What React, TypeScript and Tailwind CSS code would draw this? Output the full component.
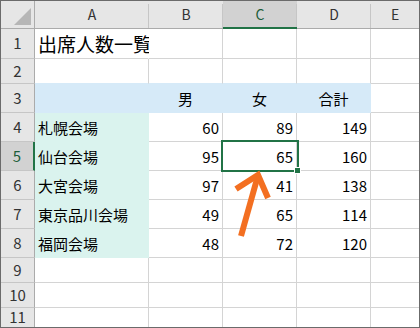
import React from "react";

type Fill = "white" | "blue" | "teal";

const COLS = ["A", "B", "C", "D", "E"];
const ROW_H = ["h-[30px]", "h-[25px]", "h-[29px]", "h-[29px]", "h-[29px]", "h-[29px]", "h-[29px]", "h-[29px]", "h-[25px]", "h-[25px]", "h-[19px]"];

// sheet contents, row 1..11, columns A..E
const DATA: string[][] = [
  ["出席人数一覧", "", "", "", ""],
  ["", "", "", "", ""],
  ["", "男", "女", "合計", ""],
  ["札幌会場", "60", "89", "149", ""],
  ["仙台会場", "95", "65", "160", ""],
  ["大宮会場", "97", "41", "138", ""],
  ["東京品川会場", "49", "65", "114", ""],
  ["福岡会場", "48", "72", "120", ""],
  ["", "", "", "", ""],
  ["", "", "", "", ""],
  ["", "", "", "", ""],
];

const BG: Record<Fill, string> = {
  white: "bg-white",
  blue: "bg-[#d6eaf8]",
  teal: "bg-[#daf3ee]",
};
const BR: Record<string, string> = {
  gray: "border-r-[#d4d4d4]",
  white: "border-r-white",
  blue: "border-r-[#d6eaf8]",
  teal: "border-r-[#daf3ee]",
};
const BB: Record<string, string> = {
  gray: "border-b-[#d4d4d4]",
  blue: "border-b-[#d6eaf8]",
  teal: "border-b-[#daf3ee]",
};

function fillOf(r: number, c: number): Fill {
  if (r === 3 && c <= 3) return "blue";
  if (r >= 4 && r <= 8 && c === 0) return "teal";
  return "white";
}

function DataCell({ r, c }: { r: number; c: number }) {
  const text = DATA[r - 1][c];
  const fill = fillOf(r, c);
  const right = c === 4 ? "border-r-0" : fill !== "white" ? BR[fill] : r === 1 && c === 0 ? BR.white : BR.gray;
  const below = r < 11 ? fillOf(r + 1, c) : "white";
  const bottom = r === 11 ? "border-b-0" : fill !== "white" ? BB[fill] : below !== "white" ? BB[below] : BB.gray;
  const isNum = /^\d+$/.test(text);
  const align = r === 3 ? "justify-center" : isNum ? "justify-end pr-[3px]" : "justify-start pl-[3px]";
  const size = r === 1 ? "text-[19px]" : "text-[15px]";
  const selected = r === 5 && c === 2;

  return (
    <div className={`relative flex items-center border-r border-b ${BG[fill]} ${right} ${bottom} ${align} ${ROW_H[r - 1]}`}>
      <span className={`whitespace-nowrap text-black leading-none ${size}`}>{text}</span>
      {selected && (
        <>
          <div className="absolute -left-[2px] -top-[2px] w-[78px] h-[32px] border-2 border-[#217346] z-10" />
          <div className="absolute left-[71px] top-[25px] w-[7px] h-[7px] bg-[#217346] border border-white z-20" />
        </>
      )}
    </div>
  );
}

export default function App() {
  return (
    <div className="w-[420px] h-[328px] border border-[#6b6b6b] bg-white overflow-hidden font-['Noto_Sans_CJK_JP','Noto_Sans',sans-serif]">
      <div className="relative grid grid-cols-[34px_114px_74px_74px_74px_1fr]">
        {/* corner */}
        <div className="h-[28px] bg-[#e6e6e6] border-r border-b border-[#ababab] flex items-end justify-end pr-[2px] pb-[2px]">
          <svg width="18" height="18" viewBox="0 0 18 18">
            <polygon points="0,17 17,0 17,17" fill="#b6b6b6" />
          </svg>
        </div>
        {/* column headers */}
        {COLS.map((col, i) => {
          const sel = col === "C";
          return (
            <div
              key={col}
              className={`relative h-[28px] flex items-center justify-center text-[14px] ${
                sel ? "bg-[#d2d2d2] text-[#1d5e3a] border-b-2 border-b-[#217346]" : "bg-[#e6e6e6] text-[#333333] border-b border-b-[#ababab]"
              } ${i < 4 ? "after:absolute after:right-0 after:top-[3px] after:bottom-0 after:w-px after:bg-[#c6c6c6]" : ""}`}
            >
              {col}
            </div>
          );
        })}
        {/* rows */}
        {DATA.map((_, ri) => {
          const r = ri + 1;
          const sel = r === 5;
          return (
            <React.Fragment key={r}>
              <div
                className={`flex items-center justify-center text-[15px] border-b ${r === 11 ? "border-b-0" : "border-b-[#c6c6c6]"} ${
                  sel ? "bg-[#d2d2d2] text-[#1d5e3a] border-r-2 border-r-[#217346]" : "bg-[#e6e6e6] text-[#333333] border-r border-r-[#ababab]"
                } ${ROW_H[ri]}`}
              >
                {r}
              </div>
              {COLS.map((_, c) => (
                <DataCell key={c} r={r} c={c} />
              ))}
            </React.Fragment>
          );
        })}

        {/* annotation arrow */}
        <svg className="absolute left-0 top-0 z-30 pointer-events-none" width="418" height="326" viewBox="1 1 418 326">
          <line x1="241" y1="236" x2="257" y2="179" stroke="#f36f21" strokeWidth="6" />
          <polyline points="236,189 258,175 268,198" fill="none" stroke="#f36f21" strokeWidth="6" strokeLinejoin="miter" />
        </svg>
      </div>
    </div>
  );
}
